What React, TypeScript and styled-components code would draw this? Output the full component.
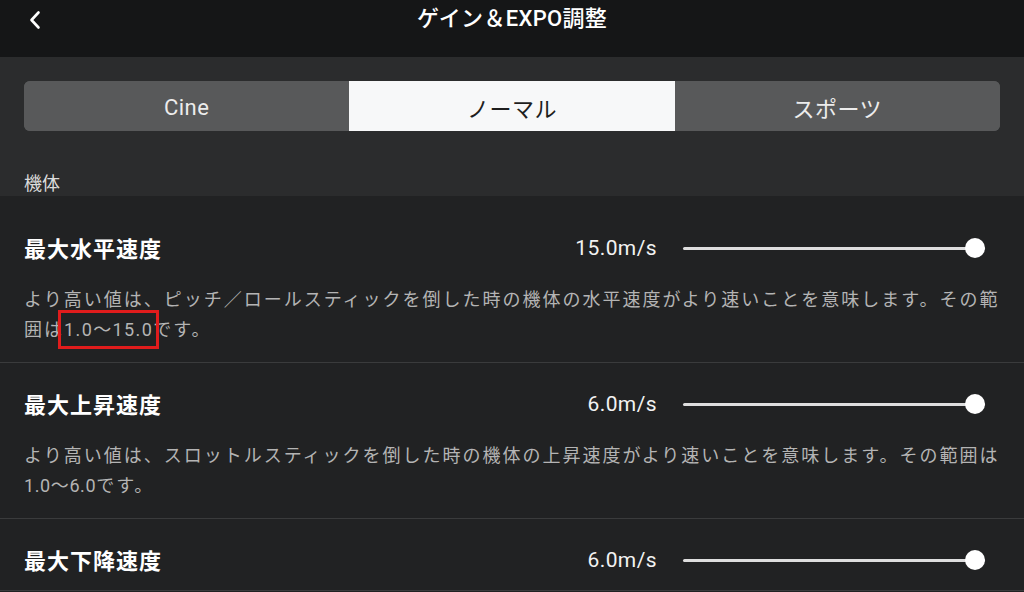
import React from "react";
import styled, { createGlobalStyle } from "styled-components";

const Global = createGlobalStyle`
  html, body { margin: 0; padding: 0; background: #212223; }
  body { width: 1024px; height: 592px; overflow: hidden; font-family: "Roboto", "Noto Sans CJK JP", sans-serif; }
  * { box-sizing: border-box; }
`;

const Screen = styled.div`
  width: 1024px;
  height: 592px;
  display: flex;
  flex-direction: column;
  background: #212223;
  overflow: hidden;
`;

const Header = styled.header`
  height: 57px;
  flex: none;
  display: grid;
  grid-template-columns: 72px 1fr 72px;
  align-items: center;
  background: #151617;
`;

const BackButton = styled.button`
  background: none;
  border: none;
  padding: 0 0 18px 28px;
  display: flex;
  align-items: center;
  cursor: pointer;
`;

const Title = styled.h1`
  margin: 0 0 26px;
  text-align: center;
  color: #ffffff;
  font-size: 22px;
  font-weight: 500;
  letter-spacing: 0.3px;
`;

const TopSection = styled.section`
  height: 139px;
  flex: none;
  background: #2b2c2d;
  padding: 24px 24px 0;
  display: flex;
  flex-direction: column;
`;

const Segmented = styled.div`
  display: grid;
  grid-template-columns: 1fr 1fr 1fr;
  height: 51px;
  border-radius: 6px;
  overflow: hidden;
  background: #58595a;
`;

const Segment = styled.div<{ $active?: boolean }>`
  display: flex;
  align-items: center;
  justify-content: center;
  padding-top: 2px;
  font-size: 22px;
  letter-spacing: 0.5px;
  background: ${(p) => (p.$active ? "#f7f8f9" : "#58595a")};
  color: ${(p) => (p.$active ? "#1e1e1e" : "#ececec")};
`;

const SectionLabel = styled.div`
  margin-top: 41px;
  font-size: 18px;
  line-height: 24px;
  color: #dcdcdc;
`;

const List = styled.div`
  padding-top: 11px;
  display: flex;
  flex-direction: column;
`;

const Row = styled.div`
  padding: 28px 0 17px 24px;
  border-bottom: 1px solid #3a3b3c;
`;

const RowHead = styled.div`
  height: 26px;
  display: flex;
  align-items: center;
`;

const RowTitle = styled.div`
  flex: 1;
  margin-top: -3px;
  color: #ffffff;
  font-size: 22px;
  font-weight: 700;
  letter-spacing: 1px;
`;

const Value = styled.div`
  color: #f2f2f2;
  font-size: 21px;
  letter-spacing: 0.4px;
  text-align: right;
  margin-right: 26px;
`;

const SliderTrack = styled.div`
  position: relative;
  width: 302px;
  height: 3px;
  margin-right: 39px;
  background: #dedede;
  border-radius: 2px;
`;

const Thumb = styled.div`
  position: absolute;
  top: 50%;
  width: 20px;
  height: 20px;
  margin: -10px 0 0 -10px;
  border-radius: 50%;
  background: #ffffff;
`;

const Desc = styled.p`
  margin: 24px 0 0;
  padding-right: 14px;
  color: #b4b4b4;
  font-size: 18px;
  line-height: 30px;
  letter-spacing: 2px;
`;

const Num = styled.span`
  letter-spacing: 0.6px;
`;

const Mark = styled.span`
  letter-spacing: 1.4px;
  padding: 3px 0;
  outline: 3px solid #e01c1c;
  outline-offset: 3px;
`;

type Item = {
  title: string;
  value: string;
  ratio: number;
  desc?: React.ReactNode;
};

const items: Item[] = [
  {
    title: "最大水平速度",
    value: "15.0m/s",
    ratio: 0.967,
    desc: (
      <>
        より高い値は、ピッチ／ロールスティックを倒した時の機体の水平速度がより速いことを意味します。その範囲は
        <Mark>1.0〜15.0</Mark>です。
      </>
    ),
  },
  {
    title: "最大上昇速度",
    value: "6.0m/s",
    ratio: 0.967,
    desc: (
      <>
        より高い値は、スロットルスティックを倒した時の機体の上昇速度がより速いことを意味します。その範囲は
        <Num>1.0〜6.0</Num>です。
      </>
    ),
  },
  {
    title: "最大下降速度",
    value: "6.0m/s",
    ratio: 0.967,
  },
];

export default function App() {
  return (
    <Screen>
      <Global />
      <Header>
        <BackButton aria-label="戻る">
          <svg width="14" height="20" viewBox="0 0 14 20">
            <path d="M10.5 2.5 L3.5 10 L10.5 17.5" fill="none" stroke="#ffffff" strokeWidth="2.6" strokeLinecap="round" strokeLinejoin="round" />
          </svg>
        </BackButton>
        <Title>ゲイン＆EXPO調整</Title>
        <div />
      </Header>
      <TopSection>
        <Segmented>
          <Segment>Cine</Segment>
          <Segment $active>ノーマル</Segment>
          <Segment>スポーツ</Segment>
        </Segmented>
        <SectionLabel>機体</SectionLabel>
      </TopSection>
      <List>
        {items.map((it) => (
          <Row key={it.title}>
            <RowHead>
              <RowTitle>{it.title}</RowTitle>
              <Value>{it.value}</Value>
              <SliderTrack>
                <Thumb style={{ left: `${it.ratio * 100}%` }} />
              </SliderTrack>
            </RowHead>
            {it.desc && <Desc>{it.desc}</Desc>}
          </Row>
        ))}
      </List>
    </Screen>
  );
}
